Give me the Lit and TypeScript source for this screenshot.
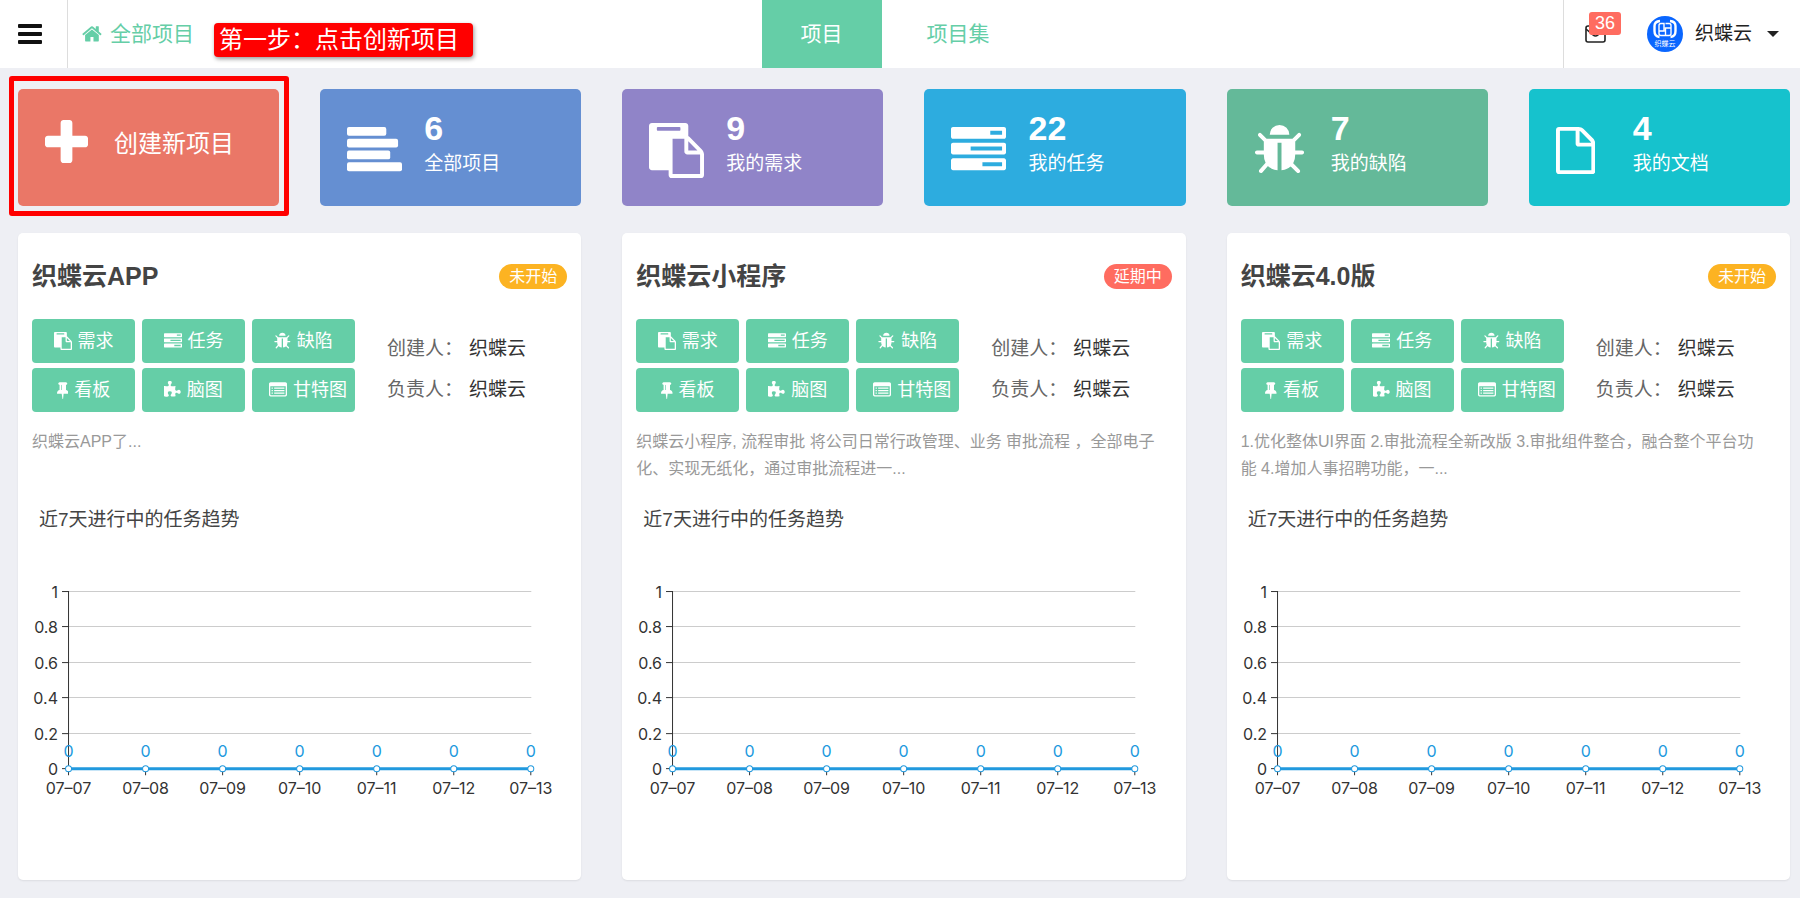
import { LitElement, html, svg, css } from "lit";
import { customElement, property } from "lit/decorators.js";

type IconName = "home" | "plus" | "align" | "paste" | "tasks" | "bug" | "file" | "pin" | "puzzle" | "list";

// viewBox and artwork for every glyph of the icon set
const ICONS: Record<IconName, { box: string; art: unknown }> = {
  home: {
    box: "60 60 1680 1680",
    art: svg`<path d="M1472 992v480q0 26-19 45t-45 19h-384v-384h-256v384h-384q-26 0-45-19t-19-45v-480q0-1 .5-3t.5-3l575-474 575 474q1 2 1 6zm223-69l-62 74q-8 9-21 11h-3q-13 0-21-7l-692-577-692 577q-12 8-24 7-13-2-21-11l-62-74q-8-10-7-23.5t11-21.5l719-599q32-26 76-26t76 26l244 204v-195q0-14 9-23t23-9h192q14 0 23 9t9 23v408l219 182q10 8 11 21.5t-7 23.5z"/>`,
  },
  plus: {
    box: "192 128 1408 1408",
    art: svg`<path d="M1600 736v192q0 40-28 68t-68 28h-416v416q0 40-28 68t-68 28h-192q-40 0-68-28t-28-68v-416h-416q-40 0-68-28t-28-68v-192q0-40 28-68t68-28h416v-416q0-40 28-68t68-28h192q40 0 68 28t28 68v416h416q40 0 68 28t28 68z"/>`,
  },
  align: {
    box: "0 0 1792 1792",
    art: svg`<rect y="128" width="1280" height="288" rx="64"/><rect y="512" width="1664" height="288" rx="64"/><rect y="896" width="1408" height="288" rx="64"/><rect y="1280" width="1792" height="288" rx="64"/>`,
  },
  paste: {
    box: "0 0 1792 1792",
    art: svg`<path d="M768 1664h896v-640h-416q-40 0-68-28t-28-68v-416h-384v1152zm256-1440v-64q0-13-9.5-22.5t-22.5-9.5h-704q-13 0-22.5 9.5t-9.5 22.5v64q0 13 9.5 22.5t22.5 9.5h704q13 0 22.5-9.5t9.5-22.5zm256 672h299l-299-299v299zm512 128v672q0 40-28 68t-68 28h-960q-40 0-68-28t-28-68v-160h-544q-40 0-68-28t-28-68v-1344q0-40 28-68t68-28h1088q40 0 68 28t28 68v328q21 13 36 28l408 408q28 28 48 76t20 88z"/>`,
  },
  tasks: {
    box: "0 0 1792 1792",
    art: svg`<path d="M1024 1408h640v-128h-640v128zm-384-512h1024v-128h-1024v128zm640-512h384v-128h-384v128zm512 832v256q0 26-19 45t-45 19h-1664q-26 0-45-19t-19-45v-256q0-26 19-45t45-19h1664q26 0 45 19t19 45zm0-512v256q0 26-19 45t-45 19h-1664q-26 0-45-19t-19-45v-256q0-26 19-45t45-19h1664q26 0 45 19t19 45zm0-512v256q0 26-19 45t-45 19h-1664q-26 0-45-19t-19-45v-256q0-26 19-45t45-19h1664q26 0 45 19t19 45z"/>`,
  },
  bug: {
    box: "64 0 1664 1792",
    art: svg`<path d="M1696 960q0 26-19 45t-45 19h-224q0 171-67 290l208 209q19 19 19 45t-19 45q-18 19-45 19t-45-19l-198-197q-5 5-15 13t-42 28.5-65 36.5-82 29-97 13v-896h-128v896q-51 0-101.5-13.5t-87-33-66-39-43.5-32.5l-15-14-183 207q-20 21-48 21-24 0-43-16-19-18-20.5-44.5t15.5-46.5l202-227q-58-114-58-274h-224q-26 0-45-19t-19-45 19-45 45-19h224v-294l-173-173q-19-19-19-45t19-45 45-19 45 19l173 173h844l173-173q19-19 45-19t45 19 19 45-19 45l-173 173v294h224q26 0 45 19t19 45zm-480-576h-640q0-133 93.5-226.5t226.5-93.5 226.5 93.5 93.5 226.5z"/>`,
  },
  file: {
    box: "0 -128 1280 1792",
    art: svg`<path fill-rule="evenodd" d="M1212 380q28 28 48 76t20 88v896q0 40-28 68t-68 28h-1088q-40 0-68-28t-28-68v-1344q0-40 28-68t68-28h640q40 0 88 20t76 48zm-444-244v376h376q-10-29-22-41l-313-313q-12-12-41-22zm384 1272v-768h-416q-40 0-68-28t-28-68v-416h-512v1280z"/>`,
  },
  pin: {
    box: "320 0 1152 1792",
    art: svg`<path d="M800 864v-448q0-14-9-23t-23-9-23 9-9 23v448q0 14 9 23t23 9 23-9 9-23zm672 352q0 26-19 45t-45 19h-429l-51 483q-2 12-10.5 20.5t-20.5 8.5h-1q-27 0-32-27l-76-485h-404q-26 0-45-19t-19-45q0-123 78.5-221.5t177.5-98.5v-512q-52 0-90-38t-38-90 38-90 90-38h640q52 0 90 38t38 90-38 90-90 38v512q99 0 177.5 98.5t78.5 221.5z"/>`,
  },
  puzzle: {
    box: "91 0 1664 1792",
    art: svg`<path d="M1755 1083q0 81-44.5 135t-123.5 54q-41 0-77.5-17.5t-59-38-56.5-38-71-17.5q-110 0-110 124 0 39 16 115t15 115v5q-22 0-33 1-34 3-97.5 11.5t-115.5 13.5-98 5q-61 0-103-26.5t-42-83.5q0-37 17.5-71t38-56.5 38-59 17.5-77.5q0-79-54-123.5t-135-44.5q-84 0-143 45.5t-59 127.5q0 43 15 83t33.5 64.5 33.5 53 15 50.5q0 45-46 89-37 35-117 35-95 0-245-24-9-2-27.5-4t-27.5-4l-13-2q-1 0-3-1-2 0-2-1v-1024q2 1 17.5 3.5t34 5 21.5 3.5q150 24 245 24 80 0 117-35 46-44 46-89 0-22-15-50.5t-33.5-53-33.5-64.5-15-83q0-82 59-127.5t144-45.5q80 0 134 44.5t54 123.5q0 41-17.5 77.5t-38 59-38 56.5-17.5 71q0 57 42 83.5t103 26.5q64 0 180-15t163-17v2q-1 2-3.5 17.5t-5 34-3.5 21.5q-24 150-24 245 0 80 35 117 44 46 89 46 22 0 50.5-15t53-33.5 64.5-33.5 83-15q82 0 127.5 59t45.5 143z"/>`,
  },
  list: {
    box: "0 0 1792 1792",
    art: svg`<path fill-rule="evenodd" d="M160 128h1472q66 0 113 47t47 113v1088q0 66-47 113t-113 47h-1472q-66 0-113-47t-47-113v-1088q0-66 47-113t113-47zM128 512v832q0 64 64 64h1408q64 0 64-64v-832z"/><path d="M256 640h128v128h-128zM512 640h1024v128h-1024zM256 896h128v128h-128zM512 896h1024v128h-1024zM256 1152h128v128h-128zM512 1152h1024v128h-1024z"/>`,
  },
};

const icon = (name: IconName) =>
  html`<svg class="icon icon-${name}" viewBox=${ICONS[name].box} fill="currentColor" aria-hidden="true">${ICONS[name].art}</svg>`;

const FONT = css`"Liberation Sans", "Noto Sans CJK SC", sans-serif`;

interface Project {
  name: string;
  status: string;
  late?: boolean;
  description: string;
}

const STATS: { icon: IconName; count: number; label: string; tone: string }[] = [
  { icon: "align", count: 6, label: "全部项目", tone: "blue" },
  { icon: "paste", count: 9, label: "我的需求", tone: "purple" },
  { icon: "tasks", count: 22, label: "我的任务", tone: "sky" },
  { icon: "bug", count: 7, label: "我的缺陷", tone: "green" },
  { icon: "file", count: 4, label: "我的文档", tone: "teal" },
];

const PROJECTS: Project[] = [
  { name: "织蝶云APP", status: "未开始", description: "织蝶云APP了..." },
  {
    name: "织蝶云小程序",
    status: "延期中",
    late: true,
    description: "织蝶云小程序, 流程审批 将公司日常行政管理、业务 审批流程 ，全部电子化、实现无纸化，通过审批流程进一...",
  },
  {
    name: "织蝶云4.0版",
    status: "未开始",
    description: "1.优化整体UI界面 2.审批流程全新改版 3.审批组件整合，融合整个平台功能 4.增加人事招聘功能，一...",
  },
];

const ACTIONS: [IconName, string][] = [
  ["paste", "需求"],
  ["tasks", "任务"],
  ["bug", "缺陷"],
  ["pin", "看板"],
  ["puzzle", "脑图"],
  ["list", "甘特图"],
];

@customElement("trend-chart")
class TrendChart extends LitElement {
  @property({ attribute: false }) days = ["07–07", "07–08", "07–09", "07–10", "07–11", "07–12", "07–13"];
  @property({ attribute: false }) values = [0, 0, 0, 0, 0, 0, 0];

  static styles = css`
    :host { display: block; }
    svg { display: block; width: 100%; overflow: visible; font-family: Inter, "Noto Sans CJK SC", sans-serif; font-size: 16px; }
    .grid { stroke: #ccc; }
    .axis { stroke: #333; }
    .label { fill: #333; }
    .middle { text-anchor: middle; }
    .end { text-anchor: end; }
    .line { stroke: #2199de; stroke-width: 3; fill: none; }
    .dot { stroke: #2199de; fill: #fff; }
    .value { fill: #2199de; text-anchor: middle; }
  `;

  render() {
    const ticks = ["1", "0.8", "0.6", "0.4", "0.2", "0"];
    const rows = [60, 95, 131, 166, 202, 237].map((y) => y + 0.5);
    const x = (i: number) => 36.5 + i * 77;
    const y = (v: number) => 237.5 - v * 177;
    return html`<svg viewBox="0 2 535 347" role="img" aria-label="近7天进行中的任务趋势">
      ${ticks.map((t, i) => svg`
        ${i < 5 ? svg`<path class="grid" d="M37 ${rows[i]}H499"/>` : ""}
        <path class="axis" d="M30 ${rows[i]}H37"/>
        <text class="label end" x="26" y=${rows[i] + 6}>${t}</text>`)}
      <path class="axis" d="M36.5 60V238"/>
      ${this.days.map((d, i) => svg`
        <path class="axis" d="M${x(i)} 238V244"/>
        <text class="label middle" x=${x(i)} y="263">${d}</text>`)}
      <path class="line" d="M${this.values.map((v, i) => `${x(i)} ${y(v)}`).join("L")}"/>
      ${this.values.map((v, i) => svg`
        <circle class="dot" cx=${x(i)} cy=${y(v)} r="3"/>
        <text class="value" x=${x(i)} y=${y(v) - 12}>${v}</text>`)}
    </svg>`;
  }
}

@customElement("project-card")
class ProjectCard extends LitElement {
  @property({ attribute: false }) project!: Project;

  static styles = css`
    :host { display: block; background: #fff; border-radius: 5px; box-shadow: 0 1px 2px rgba(0, 0, 0, 0.08); padding: 25px 14px 0; color: #444; }
    .head { display: flex; align-items: center; justify-content: space-between; }
    h2 { margin: 0; font-size: 25px; line-height: 36px; font-weight: 700; }
    .status { background: #fcb322; color: #fff; border-radius: 13px; padding: 0 10px; font-size: 16px; line-height: 25px; }
    .late { background: #ff6c60; }
    .body { display: flex; align-items: center; gap: 32px; margin-top: 25px; }
    .actions { display: grid; grid-template-columns: repeat(3, 103px); gap: 5px 7px; }
    button { display: flex; align-items: center; justify-content: center; gap: 6px; height: 44px; padding: 0 5px; border: 0; border-radius: 4px; background: #65cea7; color: #fff; font: inherit; font-size: 18px; line-height: 26px; white-space: nowrap; cursor: pointer; }
    .wide { justify-content: flex-start; padding-left: 17px; }
    .icon { height: 18px; flex: none; }
    dl { display: grid; grid-template-columns: auto auto; gap: 14px 6px; margin: 0; padding-top: 6px; font-size: 19px; line-height: 27px; white-space: nowrap; }
    dt { color: #666; }
    dd { margin: 0; color: #333; }
    .description { margin: 16px 0 0; padding-right: 10px; min-height: 54px; font-size: 16px; line-height: 27px; color: #999; }
    h3 { margin: 24px 0 0; padding-left: 7px; font-size: 19px; line-height: 27px; font-weight: 400; }
  `;

  render() {
    const p = this.project;
    return html`
      <div class="head"><h2>${p.name}</h2><span class="status ${p.late ? "late" : ""}">${p.status}</span></div>
      <div class="body">
        <div class="actions">
          ${ACTIONS.map(([name, label]) => html`<button type="button" class=${label.length > 2 ? "wide" : ""}>${icon(name)}<span>${label}</span></button>`)}
        </div>
        <dl><dt>创建人：</dt><dd>织蝶云</dd><dt>负责人：</dt><dd>织蝶云</dd></dl>
      </div>
      <p class="description">${p.description}</p>
      <h3>近7天进行中的任务趋势</h3>
      <trend-chart></trend-chart>
    `;
  }
}

@customElement("app-root")
class AppRoot extends LitElement {
  static styles = css`
    :host { display: block; min-height: 100vh; background: #eeeff4; font-family: ${FONT}; color: #333; }
    * { box-sizing: border-box; }
    button { border: 0; background: none; padding: 0; font: inherit; color: inherit; cursor: pointer; }
    a { color: inherit; text-decoration: none; }
    header { position: relative; display: grid; grid-template-columns: 1fr auto 1fr; height: 68px; background: #fff; color: #65cea7; font-size: 21px; line-height: 30px; }
    .left, nav, .right, .user, .crumb { display: flex; align-items: center; }
    .menu { width: 68px; height: 68px; padding-left: 18px; border-right: 1px solid #ddd; color: #111; }
    .menu svg { display: block; width: 24px; height: 20px; }
    .crumb { gap: 8px; padding-left: 14px; }
    .crumb .icon { width: 20px; height: 20px; }
    .hint { position: absolute; left: 214px; top: 23px; padding: 0 14px 0 5px; border-radius: 4px; background: #f00; box-shadow: 1px 2px 4px rgba(0, 0, 0, 0.4); color: #fff; font-size: 24px; line-height: 34px; white-space: nowrap; }
    nav { gap: 6px; margin-right: 10px; }
    nav a { padding: 0 39px; line-height: 68px; }
    nav .active { background: #65cea7; color: #fff; }
    .right { justify-self: end; padding: 0 21px; gap: 41px; border-left: 1px solid #ddd; color: #222; font-size: 19px; }
    .mail { position: relative; display: flex; }
    .mail svg { display: block; width: 21px; height: 18px; }
    .count { position: absolute; left: 4px; top: -13px; padding: 0 6px; border-radius: 3px; background: #ff6c60; color: #fff; font-size: 18px; line-height: 23px; }
    .avatar { display: block; width: 36px; height: 36px; margin-right: 12px; }
    .avatar text { font-size: 7px; text-anchor: middle; fill: #fff; }
    .caret { margin-left: 15px; border: 6px solid transparent; border-top-color: #222; border-bottom: 0; }
    main { padding: 21px 10px 18px 18px; display: grid; gap: 27px; }
    .stats { display: grid; grid-template-columns: repeat(6, 1fr); gap: 41px; }
    .cards { display: grid; grid-template-columns: repeat(3, 1fr); gap: 41px; }
    .stat { position: relative; display: flex; align-items: flex-start; height: 117px; border-radius: 5px; padding: 21px 10px 0 27px; color: #fff; text-align: left; white-space: nowrap; }
    .stat .icon { display: block; height: 55px; flex: none; }
    .glyph { width: 77px; padding-top: 13px; flex: none; }
    .stat strong { display: block; font-size: 34px; line-height: 36px; margin-bottom: 4px; }
    .label { display: block; font-size: 19px; line-height: 27px; }
    .create { align-items: center; gap: 26px; padding: 0 10px 13px 27px; background: #ea7767; font-size: 24px; }
    .create .icon { width: 43px; height: 43px; }
    .create::after { content: ""; position: absolute; inset: -13px -10px -10px -9px; border: 5px solid #f00; border-radius: 3px; }
    .blue { background: #658fd2; }
    .purple { background: #9084c8; }
    .sky { background: #2dacdf; }
    .green { background: #64b999; }
    .teal { background: #16c2cd; }
  `;

  render() {
    return html`
      <header>
        <div class="left">
          <button class="menu" type="button" aria-label="菜单">
            <svg viewBox="0 0 24 20" fill="currentColor"><rect width="24" height="4" rx="1"/><rect y="8" width="24" height="4" rx="1"/><rect y="16" width="24" height="4" rx="1"/></svg>
          </button>
          <a class="crumb" href="#">${icon("home")}<span>全部项目</span></a>
        </div>
        <nav><a class="active" href="#">项目</a><a href="#">项目集</a></nav>
        <div class="right">
          <button class="mail" type="button" aria-label="消息">
            <svg viewBox="0 0 21 18" fill="none" stroke="currentColor" stroke-width="1.6"><rect x="1" y="1" width="19" height="16" rx="2"/><path d="M1 4l7 6q2.500 2 5 0l7-6"/></svg>
            <span class="count">36</span>
          </button>
          <button class="user" type="button">
            <svg class="avatar" viewBox="0 0 36 36" aria-hidden="true">
              <circle cx="18" cy="18" r="18" fill="#0a66ff"/>
              <g fill="none" stroke="#fff">
                <path stroke-width="2.400" d="M13 5Q7.500 5.500 7.500 10v5q0 5.500 5 6M23 5q5.500 .5 5.500 5v5q0 5.500-5 6"/>
                <path stroke-width="1.400" d="M17 7.500h-3q-2 0-2 2v5.500h5zM18.500 7.500h3.500q2 0 2 2v2.500h-5.500V19.500h3.500q2 0 2-2V12M12 15v2.500q0 2 2 2h4.500"/>
              </g>
              <text x="18" y="30">织蝶云</text>
            </svg>
            <span>织蝶云</span><i class="caret"></i>
          </button>
        </div>
        <div class="hint">第一步：点击创新项目</div>
      </header>
      <main>
        <div class="stats">
          <button class="stat create" type="button">${icon("plus")}<span>创建新项目</span></button>
          ${STATS.map((s) => html`<a class="stat ${s.tone}" href="#"><span class="glyph">${icon(s.icon)}</span><span><strong>${s.count}</strong><span class="label">${s.label}</span></span></a>`)}
        </div>
        <div class="cards">${PROJECTS.map((p) => html`<project-card .project=${p}></project-card>`)}</div>
      </main>
    `;
  }
}
